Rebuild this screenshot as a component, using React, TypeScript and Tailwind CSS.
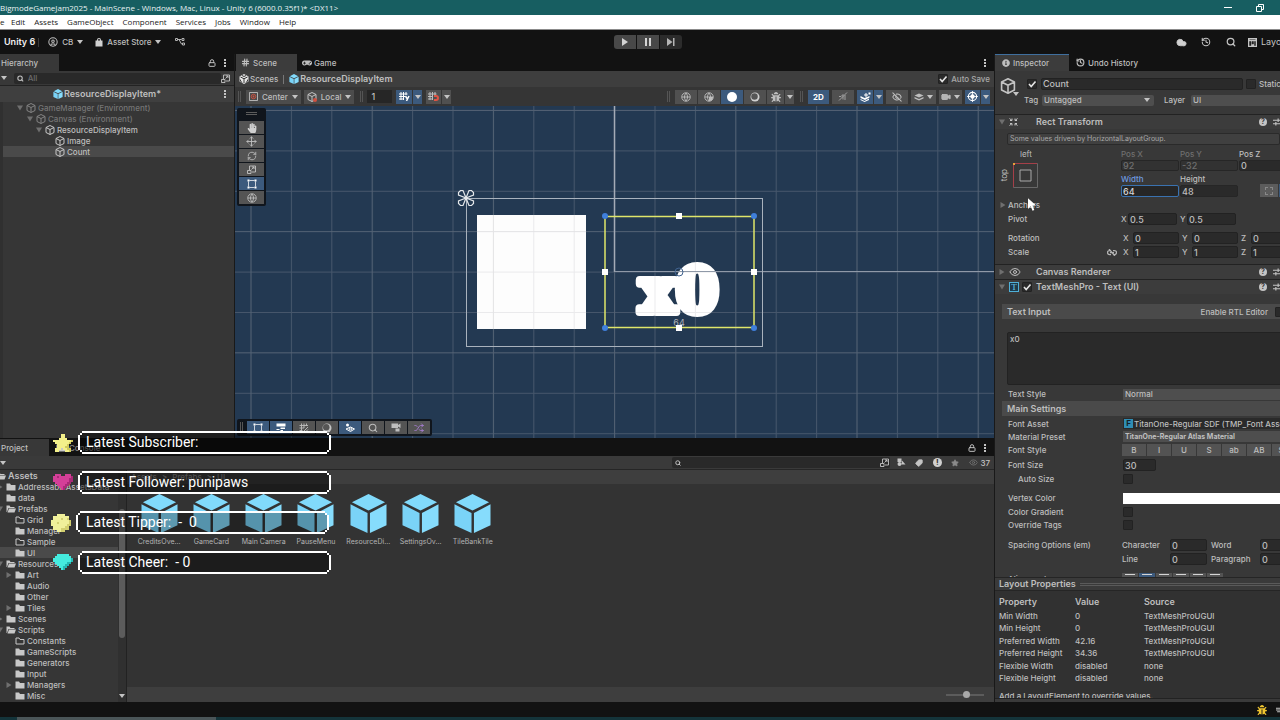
import type { ReactNode } from 'react'
import { CircleUser, Cloud, Eye, EyeOff, Hash, History, Lock, Move, RefreshCw, Search, Shuffle, Star, Tag, Video } from 'lucide-react'
import { FaBug, FaGamepad, FaHandPaper, FaInfoCircle } from 'react-icons/fa'

const Caret = ({ className = 'text-[#c4c4c4]' }: { className?: string }) => (
  <svg viewBox="0 0 6 4" className={`h-[4px] w-[6px] shrink-0 ${className}`}>
    <path d="M0 0h6L3 4z" fill="currentColor" />
  </svg>
)

const Fold = ({ open = false }: { open?: boolean }) => (
  <svg viewBox="0 0 6 6" className="h-[6px] w-[6px] shrink-0 text-[#6f6f6f]">
    <path d={open ? 'M0 .5h6L3 5.5z' : 'M.5 0v6L5.5 3z'} fill="currentColor" />
  </svg>
)

const Dots = () => (
  <svg viewBox="0 0 2 8" className="h-[8px] w-[2px] shrink-0" fill="#c4c4c4">
    <path d="M0 0h2v2H0zM0 3h2v2H0zM0 6h2v2H0z" />
  </svg>
)

const CubeOutline = ({ className = 'h-[10px] w-[10px] text-[#c4c4c4]' }: { className?: string }) => (
  <svg viewBox="0 0 20 20" className={`shrink-0 ${className}`} fill="none" stroke="currentColor" strokeWidth="2" strokeLinejoin="round">
    <path d="M10 1l8 4v10l-8 4-8-4V5zM2 5l8 4 8-4M10 9v10" />
  </svg>
)

const PrefabCube = ({ className = 'h-[11px] w-[11px]' }: { className?: string }) => (
  <svg viewBox="0 0 38 40" className={`shrink-0 ${className}`}>
    <path d="M19 0l17 8.500-17 8.500L2 8.500z" fill="#81dafb" />
    <path d="M.5 10.500L18 19.500V40L.5 32z" fill="#7ad3f7" />
    <path d="M37.500 10.500L20.500 19.500V40l17-8z" fill="#86dcfc" />
  </svg>
)

const UnityMark = () => (
  <svg viewBox="0 0 20 20" className="h-[10px] w-[10px] shrink-0">
    <path d="M10 0l9 5v10l-9 5-9-5V5z" fill="#e4e4e4" />
    <path d="M10 9.500V18M10 9.500L3 6M10 9.500L17 6M6 3l4 2 4-2M2.500 11l1 4 3 2M17.500 11l-1 4-3 2" stroke="#383838" strokeWidth="2" fill="none" />
  </svg>
)

const Folder = ({ kind }: { kind: string }) => (
  <svg viewBox="0 0 20 16" className="h-[8px] w-[10px] shrink-0" fill="#c8c8c8">
    {kind === 'full' && <path d="M1 1h7l2 3h9v11H1z" />}
    {kind === 'empty' && <path d="M2 2h6l2 3h8v9H2z" fill="none" stroke="#c8c8c8" strokeWidth="2" />}
    {kind === 'open' && <path d="M1 14V1h6l2 3h8v2H5L2 14zM6 7h14l-3 8H3z" />}
  </svg>
)

const Tick = () => (
  <svg viewBox="0 0 10 10" className="pointer-events-none absolute inset-0 h-full w-full">
    <path d="M2 5l2.200 2.500L8.500 2.500" fill="none" stroke="#e4e4e4" strokeWidth="1.600" />
  </svg>
)

const Check = ({ label, checked = false }: { label: string; checked?: boolean }) => (
  <span className="relative h-[10px] w-[10px] shrink-0">
    <input type="checkbox" aria-label={label} defaultChecked={checked} className="block h-[10px] w-[10px] appearance-none rounded-[1px] border border-[#222] bg-[#2a2a2a]" />
    {checked && <Tick />}
  </span>
)

const PickerIcon = () => (
  <svg viewBox="0 0 18 18" className="h-[9px] w-[9px] shrink-0" fill="none" stroke="#c4c4c4" strokeWidth="1.800">
    <path d="M5 10V2h12v12h-7M1 11h7v6H1zM9 9l5-5M10 4h4v4" />
  </svg>
)

const HelpIcons = () => (
  <span className="-mr-[1px] ml-auto flex items-center gap-[6px]">
    <span className="flex h-[8px] w-[8px] items-center justify-center rounded-full bg-[#c4c4c4] text-[7px] leading-[8px] font-bold text-[#383838]">?</span>
    <svg viewBox="0 0 14 14" className="h-[8px] w-[8px]" fill="none" stroke="#c4c4c4" strokeWidth="2">
      <path d="M0 4h14M9 1v6M0 10h14M5 7v6" />
    </svg>
  </span>
)

const Menu = () => (
  <nav className="flex h-[15px] shrink-0 items-center border-b border-[#8b8b8b] bg-white font-['Open_Sans',sans-serif] text-[8px] leading-[14px] font-normal text-[#222]">
    <span className="w-[11px]">e</span>
    <div className="flex gap-[9px]">
      {['Edit', 'Assets', 'GameObject', 'Component', 'Services', 'Jobs', 'Window', 'Help'].map((item) => (
        <button key={item}>{item}</button>
      ))}
    </div>
  </nav>
)

const TopBar = () => (
  <div className="flex h-[24px] shrink-0 items-center overflow-hidden bg-[#121212]">
    <div className="flex flex-1 items-center">
      <span className="ml-[4px] text-[9px] font-semibold text-[#f0f0f0]">Unity 6</span>
      <span className="ml-[3px] h-[9px] w-px bg-[#3a3a3a]" />
      <button className="ml-[9px] flex items-center gap-[4px]">
        <CircleUser size={10} strokeWidth={2.5} />CB<Caret />
      </button>
      <button className="ml-[12px] flex items-center gap-[4px]">
        <svg viewBox="0 0 16 18" className="h-[9px] w-[8px]" fill="#d0d0d0">
          <path d="M1 5h14v12H1zM4 6V4a4 4 0 018 0v2h-2V4a2 2 0 00-4 0v2z" />
        </svg>
        Asset Store<Caret />
      </button>
      <svg viewBox="0 0 20 16" className="ml-[14px] h-[8px] w-[10px]" fill="none" stroke="#b4b4b4" strokeWidth="2">
        <path d="M1 1h4v4H1zM5 3h8M8 3l5 9h2M14 1h4v4h-4zM15 10h4v4h-4z" />
      </svg>
    </div>
    <div className="flex w-[666px] items-center">
      <div className="flex gap-px overflow-hidden rounded-[3px]">
        <button aria-label="Play" className="flex h-[14px] w-[22px] items-center justify-center bg-[#484848]">
          <svg viewBox="0 0 8 8" className="h-[8px] w-[8px]" fill="#d4d4d4"><path d="M1 0l6 4-6 4z" /></svg>
        </button>
        <button aria-label="Pause" className="flex h-[14px] w-[22px] items-center justify-center bg-[#484848]">
          <svg viewBox="0 0 8 8" className="h-[8px] w-[8px]" fill="#d4d4d4"><path d="M1 0h2v8H1zM5 0h2v8H5z" /></svg>
        </button>
        <button aria-label="Step" className="flex h-[14px] w-[22px] items-center justify-center bg-[#2c2c2c]">
          <svg viewBox="0 0 8 8" className="h-[8px] w-[8px]" fill="#b4b4b4"><path d="M0 0l5.500 4L0 8zM6 0h1.500v8H6z" /></svg>
        </button>
      </div>
      <div className="ml-auto flex w-[104px] items-center overflow-hidden whitespace-nowrap text-[#c4c4c4]">
        <button aria-label="Cloud"><Cloud size={11} fill="#d0d0d0" /></button>
        <button aria-label="History" className="ml-[14px]"><History size={10} strokeWidth={2.5} /></button>
        <button aria-label="Search" className="ml-[15px]"><Search size={10} strokeWidth={3} /></button>
        <button className="ml-[12px] flex items-center gap-[4px]">
          <svg viewBox="0 0 18 18" className="h-[9px] w-[9px] shrink-0"><path d="M0 0h18v18H0z" fill="#c4c4c4" /><path d="M3 7h3v8H3zM8 7h3v5H8zM13 7h2v8h-2zM3 3h12" fill="#222" stroke="#222" /></svg>
          <span className="text-[9px] font-normal">Layout</span>
        </button>
      </div>
    </div>
  </div>
)

const hierarchy = [
  { name: 'GameManager (Environment)', pad: 'pl-[14px]', fold: true, dim: true },
  { name: 'Canvas (Environment)', pad: 'pl-[24px]', fold: true, dim: true },
  { name: 'ResourceDisplayItem', pad: 'pl-[33px]', fold: true },
  { name: 'Image', pad: 'pl-[43px]' },
  { name: 'Count', pad: 'pl-[43px]', selected: true },
]

const Hierarchy = () => (
  <section className="flex w-[235px] shrink-0 flex-col border-r border-[#191919] bg-[#363636]">
    <div className="flex h-[17px] items-center bg-[#121212] pr-[8px]">
      <button className="h-full w-[59px] bg-[#383838] pl-[1px] text-left">Hierarchy</button>
      <Lock size={8} strokeWidth={3} className="mr-[8px] ml-auto" />
      <Dots />
    </div>
    <div className="flex h-[15px] items-center border-b border-[#232323] bg-[#383838] pl-px">
      <Caret />
      <label className="ml-[7px] flex h-[11px] flex-1 items-center gap-[4px] rounded-[2px] bg-[#292929] pl-[3px]">
        <Search size={7} strokeWidth={4} />
        <input aria-label="Search hierarchy" placeholder="All" className="w-full min-w-0 text-[8px] leading-[11px] outline-none placeholder:text-[#6c6c6c]" />
      </label>
      <span className="mr-[4px]"><PickerIcon /></span>
    </div>
    <div className="flex h-[16px] items-center bg-[#3f3f3f] pr-[8px] pl-[53px] text-[9px]">
      <PrefabCube className="h-[10px] w-[10px]" />
      <span className="ml-px font-semibold">ResourceDisplayItem*</span>
      <span className="ml-auto"><Dots /></span>
    </div>
    <ul className="flex-1 border-l-[3px] border-[#303030]">
      {hierarchy.map((row) => (
        <li key={row.name} className={`flex h-[11px] items-center ${row.pad} ${row.selected ? 'bg-[#4a4a4a]' : ''} ${row.dim ? 'text-[#757575]' : ''}`}>
          <span className="flex w-[9px] justify-start">{row.fold && <Fold open />}</span>
          <CubeOutline className={`h-[10px] w-[10px] ${row.dim ? 'text-[#848484]' : 'text-[#c8c8c8]'}`} />
          <span className="ml-[2px]">{row.name}</span>
        </li>
      ))}
    </ul>
  </section>
)

const Grip = () => (
  <span className="flex gap-px">
    <span className="h-[11px] w-px bg-[#555]" />
    <span className="h-[11px] w-px bg-[#555]" />
  </span>
)

const Tool = ({ label, wide = 'w-[22px]', on = false, caret = false, children }: { label: string; wide?: string; on?: boolean; caret?: boolean; children: ReactNode }) => (
  <span className="flex gap-px">
    <button aria-label={label} className={`flex h-[14px] items-center justify-center ${wide} ${on ? 'bg-[#3c5a7d] text-white' : 'bg-[#505050]'}`}>
      {children}
    </button>
    {caret && (
      <button aria-label={`${label} options`} className={`flex h-[14px] w-[9px] items-center justify-center ${on ? 'bg-[#3c5a7d]' : 'bg-[#505050]'}`}>
        <Caret />
      </button>
    )}
  </span>
)

const Globe = ({ shade = '' }: { shade?: string }) => (
  <svg viewBox="0 0 20 20" className="h-[10px] w-[10px]" fill="none" stroke="currentColor" strokeWidth="1.800">
    {shade && <path d={shade} fill="currentColor" stroke="none" />}
    <circle cx="10" cy="10" r="8.500" />
    <path d="M2 10h16M10 2c-4 5-4 11 0 16M10 2c4 5 4 11 0 16" />
  </svg>
)

const GizmoIcon = () => (
  <svg viewBox="0 0 20 20" className="h-[11px] w-[11px]" fill="none" stroke="currentColor" strokeWidth="2">
    <circle cx="10" cy="10" r="7.500" />
    <path d="M10 0v20M0 10h20" strokeWidth="1.500" />
    <path d="M10 6a4 4 0 110 8 4 4 0 110-8" fill="currentColor" stroke="none" />
  </svg>
)

const GridIcon = () => (
  <svg viewBox="0 0 20 20" className="h-[10px] w-[10px]" fill="none" stroke="currentColor" strokeWidth="1.800">
    <path d="M5 1v17M10 1v9M15 1v5M1 5h17M1 10h9M1 15h6M8 18L18 8M13 18l5-5" />
  </svg>
)

const Layers = () => (
  <svg viewBox="0 0 20 16" className="h-[8px] w-[10px]" fill="currentColor">
    <path d="M10 1l9 4-9 4-9-4zM1 8l9 4 9-4v3l-9 4-9-4z" />
  </svg>
)

const SceneToolbar = () => (
  <div className="flex h-[19px] items-center bg-[#353535] pr-[4px]">
    <span className="ml-[3px]"><Grip /></span>
    <button className="ml-[5px] flex h-[14px] items-center gap-[4px] bg-[#4c4c4c] px-[3px]">
      <svg viewBox="0 0 20 20" className="h-[9px] w-[9px]" fill="none" strokeWidth="2"><path d="M1 1h18v18H1z" stroke="#c4c4c4" /><circle cx="10" cy="10" r="5" stroke="#d0503f" /><circle cx="10" cy="10" r="2" fill="#d0503f" /></svg>
      Center<Caret />
    </button>
    <button className="ml-[3px] flex h-[14px] items-center gap-[4px] bg-[#4c4c4c] px-[3px]">
      <span className="relative"><CubeOutline /><span className="absolute right-0 bottom-0 h-[4px] w-[4px] rounded-full bg-[#d0503f]" /></span>
      Local<Caret />
    </button>
    <span className="ml-[6px]"><Grip /></span>
    <input aria-label="Grid size" defaultValue="1" className="ml-[4px] h-[13px] w-[25px] bg-[#262626] pl-[4px] text-[9px]" />
    <div className="ml-[4px] flex gap-[4px]">
      <Tool label="Grid visibility" wide="w-[16px]" on caret>
        <svg viewBox="0 0 22 18" className="h-[9px] w-[11px]" fill="none" stroke="currentColor" strokeWidth="2"><path d="M4 0v16M9 0v16M14 0v6M0 4h17M0 9h12M0 14h10" /><path d="M13 8l3 5M20 8l-5 10" strokeWidth="3" /></svg>
      </Tool>
      <Tool label="Snapping" wide="w-[15px]" caret>
        <svg viewBox="0 0 22 18" className="h-[9px] w-[11px]" fill="none" stroke="currentColor" strokeWidth="2"><path d="M4 0v16M9 0v16M14 0v6M0 4h17M0 9h10M0 14h8" /><path d="M12 8h4a3 3 0 010 8h-4" stroke="#e05545" strokeWidth="4" /></svg>
      </Tool>
    </div>
    <div className="ml-auto flex items-center gap-[5px]">
      <Grip />
      <div className="flex gap-px">
        <Tool label="Wireframe"><Globe /></Tool>
        <Tool label="Shaded wireframe"><Globe shade="M10 18a8 8 0 008-8H10z" /></Tool>
        <Tool label="Shaded" on><span className="h-[10px] w-[10px] rounded-full bg-white" /></Tool>
        <Tool label="Unlit"><svg viewBox="0 0 20 20" className="h-[10px] w-[10px]"><circle cx="10" cy="10" r="9" fill="#d0d0d0" /><circle cx="9" cy="9" r="6.500" fill="#555" /></svg></Tool>
        <Tool label="Debug draw" wide="w-[17px]" caret><FaBug size={10} /></Tool>
      </div>
      <span className="ml-px"><Grip /></span>
      <div className="flex gap-[3px]">
        <Tool label="2D view" wide="w-[21px]" on><span className="text-[8px] font-bold">2D</span></Tool>
        <Tool label="Lighting"><svg viewBox="0 0 20 18" className="h-[9px] w-[10px]" stroke="#a0a0a0" strokeWidth="2" fill="none"><path d="M2 17L18 1M2 9l4 0 4-4v10M14 6v10" /></svg></Tool>
        <Tool label="Effects" wide="w-[16px]" on caret><svg viewBox="0 0 22 20" className="h-[10px] w-[11px]" fill="currentColor"><path d="M1 8l8 4 10-4v3l-9 5-9-4zM1 14l8 4 9-5v3l-9 4-8-4zM8 5h3V2h2v3h3v2h-3v3h-2V7H8zM17 1h4v4h-4z" /></svg></Tool>
        <Tool label="Hidden objects"><EyeOff size={10} strokeWidth={2.5} /></Tool>
        <Tool label="Layers" wide="w-[25px]"><span className="flex items-center gap-[3px]"><Layers /><Caret /></span></Tool>
        <Tool label="Camera" wide="w-[23px]"><span className="flex items-center gap-[3px]"><Video size={10} fill="#b4b4b4" /><Caret /></span></Tool>
        <Tool label="Gizmos" wide="w-[15px]" on caret><GizmoIcon /></Tool>
      </div>
    </div>
  </div>
)

const corners = [[370, 110], [519, 110], [370, 222], [519, 222]]
const edges = [[444, 110], [370, 166], [519, 166], [444, 222]]

const SceneDrawing = () => (
  <svg className="absolute inset-0 h-full w-full">
    <defs>
      <pattern id="cells" x="15.500" y="4" width="40.400" height="40.400" patternUnits="userSpaceOnUse">
        <path d="M.5 0v41M0 .5h41" stroke="#b0aeb6" strokeOpacity=".25" />
      </pattern>
      <pattern id="major" x="15.500" y="125" width="121.200" height="121.200" patternUnits="userSpaceOnUse">
        <path d="M.5 0v122M0 .5h122" stroke="#b4b4b8" strokeOpacity=".12" />
      </pattern>
    </defs>
    <rect width="100%" height="100%" fill="#233952" />
    <rect x="242" y="109" width="109" height="114" fill="#fdfdfd" />
    <text x="444" y="206" textAnchor="middle" fill="#fff" stroke="#fff" strokeWidth="8" strokeLinejoin="round" className="font-['DejaVu_Serif',serif] text-[61px] font-bold">x0</text>
    <rect width="100%" height="100%" fill="url(#cells)" />
    <rect width="100%" height="100%" fill="url(#major)" />
    <path d="M379.500 0v166" stroke="#a4abb6" strokeWidth="1.500" />
    <path d="M379.500 165.500H2000" stroke="#8f99a8" />
    <rect x="231.500" y="92.500" width="296" height="148" fill="none" stroke="#a9b2bd" />
    <rect x="370" y="110.500" width="149" height="111" fill="none" stroke="#dfe66a" strokeWidth="1.500" />
    <circle cx="444" cy="166" r="4" fill="none" stroke="#41638f" />
    <text x="444" y="220" textAnchor="middle" fill="#b0b4ba" className="text-[9px] font-normal">64</text>
    {corners.map(([x, y]) => <circle key={`${x}-${y}`} cx={x} cy={y} r="3" fill="#3f7fdb" />)}
    {edges.map(([x, y]) => <rect key={`${x}-${y}`} x={x - 3} y={y - 3} width="6" height="6" fill="#fff" />)}
    <g transform="translate(231 92)" fill="none" stroke="#e4e7ea" strokeWidth="1.200">
      {[0, 90, 180, 270].map((turn) => (
        <path key={turn} d="M0 0L3 -7.500L5.500 -7.500L7.500 -5.500L7.500 -3Z" transform={`rotate(${turn})`} />
      ))}
    </g>
  </svg>
)

const RectTool = () => (
  <svg viewBox="0 0 20 20" className="h-[10px] w-[10px]" fill="none" stroke="currentColor" strokeWidth="1.500">
    <path d="M3 3h14v14H3z" strokeDasharray="10 4" strokeDashoffset="-2" />
    <path d="M1 1h4v4H1zM15 1h4v4h-4zM1 15h4v4H1zM15 15h4v4h-4z" fill="currentColor" stroke="none" />
  </svg>
)

const tools = [
  { label: 'View', icon: <FaHandPaper size={10} className="text-[#d0d0d0]" /> },
  { label: 'Move', icon: <Move size={11} /> },
  { label: 'Rotate', icon: <RefreshCw size={10} /> },
  { label: 'Scale', icon: <PickerIcon /> },
  { label: 'Rect', icon: <RectTool />, on: true },
  { label: 'Transform', icon: <Globe /> },
]

const bottomTools = [
  { label: 'Handles', icon: <RectTool />, on: true },
  { label: 'Orientation', icon: <svg viewBox="0 0 20 18" className="h-[9px] w-[10px]" fill="currentColor"><path d="M1 1h18v6H1zM9 9h9v3H9zM1 12h6v2H1zM9 14h5v4H9z" /></svg>, on: true },
  { label: 'Grid', icon: <GridIcon /> },
  { label: 'Draw mode', icon: <svg viewBox="0 0 20 20" className="h-[10px] w-[10px]"><circle cx="10" cy="10" r="9" fill="#c4c4c4" /><circle cx="8.500" cy="8.500" r="6.500" fill="#555" /></svg> },
  { label: 'Visibility', icon: <svg viewBox="0 0 20 20" className="h-[10px] w-[10px]" fill="none" stroke="currentColor" strokeWidth="2"><circle cx="5" cy="4" r="3" fill="currentColor" stroke="none" /><path d="M2 12l9-4 8 4-8 5zM8 12a3 2 0 106 0 3 2 0 10-6 0" /></svg>, on: true },
  { label: 'Search', icon: <Search size={10} strokeWidth={2.5} /> },
  { label: 'Cameras', icon: <svg viewBox="0 0 20 18" className="h-[9px] w-[10px]" fill="currentColor"><path d="M1 1h13v9H1zM14 4l5-3v9l-5-3zM9 11h8v6H9z" /></svg> },
  { label: 'Shuffle', icon: <Shuffle size={10} className="text-[#ab7fd8]" /> },
]

const SceneView = () => (
  <section className="flex min-w-0 flex-1 flex-col">
    <div className="flex h-[17px] items-center bg-[#121212] pr-[8px] pl-[1px]">
      <button className="flex h-full w-[61px] items-center gap-[3px] bg-[#3c3c3c] pl-[5px]">
        <Hash size={9} strokeWidth={3} />Scene
      </button>
      <button className="ml-[5px] flex items-center gap-[2px]"><FaGamepad size={10} />Game</button>
      <span className="ml-auto"><Dots /></span>
    </div>
    <div className="flex h-[16px] items-center bg-[#3e3e3e] pr-[4px] pl-[4px]">
      <UnityMark />
      <a href="#scenes" className="ml-px text-[8px]">Scenes</a>
      <span className="mx-[5px] h-[9px] w-px bg-[#777]" />
      <PrefabCube className="h-[10px] w-[10px]" />
      <a href="#resource" className="ml-px text-[9px] font-semibold">ResourceDisplayItem</a>
      <label className="ml-auto flex items-center gap-[3px] text-[#a8a8a8]"><Check label="Auto Save" checked />Auto Save</label>
    </div>
    <SceneToolbar />
    <div className="relative flex-1 overflow-hidden">
      <SceneDrawing />
      <div className="absolute top-[2px] left-[2px] flex flex-col gap-px rounded-[2px] bg-[#10151c] p-[2px] pt-[4px]">
        <span className="mx-auto mb-[5px] h-[3px] w-[11px] border-y border-[#5c5c5c]" />
        {tools.map((tool) => (
          <button key={tool.label} aria-label={tool.label} className={`flex h-[13px] w-[25px] items-center justify-center ${tool.on ? 'bg-[#3c5a7d] text-white' : 'bg-[#545454]'}`}>{tool.icon}</button>
        ))}
      </div>
      <div className="absolute bottom-[2px] left-[2px] flex items-center gap-px rounded-[2px] bg-[#10151c] p-[2px] pl-[3px]">
        <span className="mr-[3px]"><Grip /></span>
        {bottomTools.map((tool) => (
          <button key={tool.label} aria-label={tool.label} className={`flex h-[13px] w-[22px] items-center justify-center ${tool.on ? 'bg-[#3c5a7d] text-white' : 'bg-[#545454]'}`}>{tool.icon}</button>
        ))}
      </div>
    </div>
  </section>
)

const tree = [
  { name: 'Assets', depth: 0, kind: 'open', fold: 'open', bold: true },
  { name: 'AddressableAssetsData', depth: 1, kind: 'full', fold: 'closed' },
  { name: 'data', depth: 1, kind: 'full' },
  { name: 'Prefabs', depth: 1, kind: 'open', fold: 'open' },
  { name: 'Grid', depth: 2, kind: 'empty' },
  { name: 'Manager', depth: 2, kind: 'full' },
  { name: 'Sample', depth: 2, kind: 'empty' },
  { name: 'UI', depth: 2, kind: 'full', selected: true },
  { name: 'Resources', depth: 1, kind: 'open', fold: 'open' },
  { name: 'Art', depth: 2, kind: 'full', fold: 'closed' },
  { name: 'Audio', depth: 2, kind: 'full' },
  { name: 'Other', depth: 2, kind: 'full' },
  { name: 'Tiles', depth: 2, kind: 'full', fold: 'closed' },
  { name: 'Scenes', depth: 1, kind: 'full', fold: 'closed' },
  { name: 'Scripts', depth: 1, kind: 'open', fold: 'open' },
  { name: 'Constants', depth: 2, kind: 'empty' },
  { name: 'GameScripts', depth: 2, kind: 'full' },
  { name: 'Generators', depth: 2, kind: 'full' },
  { name: 'Input', depth: 2, kind: 'full' },
  { name: 'Managers', depth: 2, kind: 'full', fold: 'closed' },
  { name: 'Misc', depth: 2, kind: 'full' },
]
const treeIndent = ['-ml-[13px]', '-ml-[3px]', 'ml-[6px]']

const prefabs = ['CreditsOve...', 'GameCard', 'Main Camera', 'PauseMenu', 'ResourceDi...', 'SettingsOv...', 'TileBankTile']

const Project = () => (
  <section className="flex h-[264px] shrink-0 flex-col bg-[#333]">
    <div className="flex h-[18px] items-center bg-[#121212] pt-px pr-[8px]">
      <button className="h-full w-[49px] bg-[#383838] pl-[1px] text-left">Project</button>
      <button className="ml-[7px] flex items-center gap-[3px] text-[#8a8a8a]"><Folder kind="full" />Console</button>
      <Lock size={8} strokeWidth={3} className="mr-[8px] ml-auto" />
      <Dots />
    </div>
    <div className="flex h-[14px] items-center border-b border-[#262626] bg-[#3a3a3a] pr-[4px]">
      <Caret />
      <label className="ml-auto flex h-[11px] w-[218px] items-center rounded-[2px] bg-[#292929] pr-px pl-[3px]">
        <Search size={6} strokeWidth={4} />
        <input aria-label="Search assets" className="min-w-0 flex-1 px-[3px] text-[9px] leading-[11px] outline-none" />
        <PickerIcon />
      </label>
      <div className="flex items-center text-[#c4c4c4]">
        <button aria-label="Filter by type" className="w-[20px] pl-[7px]">
          <svg viewBox="0 0 18 18" className="h-[9px] w-[9px]" fill="currentColor"><path d="M1 1h8v7H1zM10 5l7 8H9zM1 12a4 4 0 108 0 4 4 0 10-8 0" /></svg>
        </button>
        <button aria-label="Filter by label" className="flex w-[18px] justify-center"><Tag size={8} fill="#c4c4c4" className="rotate-90" /></button>
        <button aria-label="Alerts" className="flex h-[9px] w-[18px] justify-center"><span className="h-[9px] w-[9px] rounded-full bg-[#d0d0d0] text-[8px] leading-[9px] font-bold text-[#333]">!</span></button>
        <button aria-label="Favorites" className="flex w-[18px] justify-center"><Star size={8} fill="#8a8a8a" className="text-[#8a8a8a]" /></button>
        <button className="flex items-center gap-[2px] pl-[5px]"><Eye size={9} className="text-[#777]" />37</button>
      </div>
    </div>
    <div className="flex min-h-0 flex-1">
      <ul className="relative w-[127px] shrink-0 overflow-hidden border-r border-[#222] bg-[#363636]">
        {tree.map((row) => (
          <li key={row.name} className={`flex h-[11px] items-center whitespace-nowrap ${row.selected ? 'bg-[#4a4a4a]' : ''}`}>
            <span className={`flex w-[9px] shrink-0 ${treeIndent[row.depth]}`}>{row.fold && <Fold open={row.fold === 'open'} />}</span>
            <Folder kind={row.kind} />
            <span className={`ml-[2px] ${row.bold ? 'text-[9px] font-semibold' : ''}`}>{row.name}</span>
          </li>
        ))}
        <li aria-hidden className="absolute top-0 right-0 h-full w-[8px] bg-[#303030]">
          <div className="mx-auto mt-[39px] h-[129px] w-[6px] rounded-full bg-[#5c5c5c]" />
          <span className="absolute bottom-[4px] left-[1px]"><Caret /></span>
        </li>
      </ul>
      <div className="flex min-w-0 flex-1 flex-col">
        <div className="flex h-[14px] items-center gap-[5px] bg-[#3e3e3e] pl-[4px] text-[#8f8f8f]">
          <a href="#assets">Assets</a><span>&gt;</span><a href="#prefabs">Prefabs</a><span>&gt;</span><a href="#ui">UI</a>
        </div>
        <div className="ml-[6px] grid w-[366px] flex-1 grid-cols-7 pt-[10px]">
          {prefabs.map((name) => (
            <button key={name} className="flex flex-col items-center self-start text-[7px] leading-[10px] font-normal text-[#b4b4b4]">
              <PrefabCube className="mb-[4px] h-[39px] w-[37px]" />
              <span className="whitespace-nowrap">{name}</span>
            </button>
          ))}
        </div>
        <div className="flex h-[15px] items-center justify-end bg-[#3e3e3e] pr-[10px]">
          <span className="relative flex h-[8px] w-[38px] items-center">
            <input type="range" aria-label="Icon size" defaultValue={55} className="h-[2px] w-full appearance-none bg-[#5c5c5c] [&::-webkit-slider-thumb]:h-[7px] [&::-webkit-slider-thumb]:w-[7px] [&::-webkit-slider-thumb]:appearance-none [&::-webkit-slider-thumb]:rounded-full [&::-webkit-slider-thumb]:bg-[#a8a8a8]" />
          </span>
        </div>
      </div>
    </div>
  </section>
)

const fieldClass = 'h-[12px] rounded-[2px] border border-[#222] bg-[#2a2a2a] px-px text-[9px] leading-[10px] outline-none'

const Axis = ({ name, of, value, wide }: { name: string; of: string; value: string; wide: string }) => (
  <label className="flex shrink-0 items-center">
    <span className="w-[7px]">{name}</span>
    <input aria-label={`${of} ${name}`} defaultValue={value} className={`${fieldClass} ${wide}`} />
  </label>
)

const Size = ({ label, value, off = false, active = false, tall = 'h-[11px]' }: { label: string; value: string; off?: boolean; active?: boolean; tall?: string }) => (
  <label className={`flex w-[58px] shrink-0 flex-col gap-px ${off ? 'text-[#6f6f6f]' : ''} ${active ? 'text-[#6f9be0]' : ''}`}>
    <span className="h-[10px] leading-[10px]">{label}</span>
    <input
      defaultValue={value}
      disabled={off}
      className={`w-full rounded-[2px] border px-px text-[9px] leading-[9px] outline-none ${tall} ${active ? 'border-[#3a72b0] bg-[#262626] text-[#d4d4d4]' : 'border-[#262626] bg-[#2a2a2a]'} ${off ? 'bg-[#323232]' : ''}`}
    />
  </label>
)

const Row = ({ label, tall = 'h-[13px]', indent = '', children }: { label: string; tall?: string; indent?: string; children?: ReactNode }) => (
  <div className={`flex shrink-0 items-center pl-[13px] ${tall}`}>
    <span className={`w-[115px] shrink-0 ${indent}`}>{label}</span>
    {children}
  </div>
)

const Header = ({ title, open = false, children }: { title: string; open?: boolean; children: ReactNode }) => (
  <div className="flex h-[15px] shrink-0 items-center border-t border-[#222] bg-[#3c3c3c] pl-[4px]">
    <Fold open={open} />
    <span className="flex w-[31px] shrink-0 items-center gap-[3px] pl-[4px]">{children}</span>
    <h2 className="text-[9px] font-semibold">{title}</h2>
    <HelpIcons />
  </div>
)

const props = [
  ['Min Width', '0', 'TextMeshProUGUI'],
  ['Min Height', '0', 'TextMeshProUGUI'],
  ['Preferred Width', '42.16', 'TextMeshProUGUI'],
  ['Preferred Height', '34.36', 'TextMeshProUGUI'],
  ['Flexible Width', 'disabled', 'none'],
  ['Flexible Height', 'disabled', 'none'],
]

const Inspector = () => (
  <aside className="relative flex w-[286px] shrink-0 flex-col overflow-hidden border-l border-[#191919] bg-[#383838] whitespace-nowrap">
    <div className="flex h-[17px] shrink-0 items-center bg-[#121212]">
      <button className="flex h-full w-[74px] items-center gap-[3px] border-t border-[#3f6f9e] bg-[#3c3c3c] pl-[7px]">
        <FaInfoCircle size={8} />Inspector
      </button>
      <button className="ml-[7px] flex items-center gap-[3px]"><History size={9} strokeWidth={3} />Undo History</button>
    </div>
    <div className="flex shrink-0 pt-[7px] pb-[8px] pl-[5px]">
      <span className="relative w-[24px] shrink-0"><CubeOutline className="h-[16px] w-[16px] text-[#c4c4c4]" /><Caret className="absolute top-[14px] left-[13px] text-[#c4c4c4]" /></span>
      <div className="flex flex-col gap-[5px]">
        <div className="flex h-[11px] items-center">
          <span className="ml-[3px] flex"><Check label="Active" checked /></span>
          <input aria-label="Name" defaultValue="Count" className={`ml-[4px] w-[202px] font-medium ${fieldClass}`} />
          <label className="ml-[3px] flex items-center gap-[3px]"><Check label="Static" />Static</label>
        </div>
        <div className="flex h-[12px] items-center">
          <label htmlFor="tag" className="w-[18px]">Tag</label>
          <span className="relative flex items-center">
            <select id="tag" className="h-[11px] w-[112px] appearance-none rounded-[2px] bg-[#4e4e4e] px-[2px] leading-[11px]"><option>Untagged</option></select>
            <Caret className="pointer-events-none absolute right-[4px] text-[#c4c4c4]" />
          </span>
          <label htmlFor="layer" className="ml-[10px] w-[27px]">Layer</label>
          <select id="layer" className="h-[11px] w-[112px] appearance-none rounded-[2px] bg-[#4e4e4e] px-[2px] leading-[11px]"><option>UI</option></select>
        </div>
      </div>
    </div>
    <div className="flex min-h-0 flex-1 flex-col overflow-hidden">
      <Header title="Rect Transform" open>
        <svg viewBox="0 0 18 16" className="h-[8px] w-[9px]" fill="none" stroke="#c4c4c4" strokeWidth="2"><path d="M1 1l5 4M6 1v4H2M17 1l-5 4M12 1v4h4M1 15l5-4M6 15v-4H2M17 15l-5-4M12 15v-4h4" /></svg>
      </Header>
      <p className="mt-[4px] ml-[12px] h-[12px] shrink-0 rounded-[2px] border border-[#2a2a2a] bg-[#404040] pl-[2px] text-[7px] leading-[10px] font-normal text-[#a8a8a8]">Some values driven by HorizontalLayoutGroup.</p>
      <div className="mt-[4px] flex h-[48px] shrink-0">
        <div className="grid w-[126px] shrink-0 grid-cols-[18px_26px] grid-rows-[13px_26px] text-[8px] font-normal">
          <span className="col-start-2 pl-[7px] leading-[10px]">left</span>
          <span className="flex rotate-180 items-center justify-center self-center [writing-mode:vertical-rl]">top</span>
          <button aria-label="Anchor presets">
            <svg viewBox="0 0 25 25" className="h-[25px] w-[25px]" fill="none"><path d="M.5 .5h24v24H.5z" stroke="#686868" /><path d="M.5 24V.5H24" stroke="#a53f48" /><path d="M7 7h11v11H7z" stroke="#a8a8a8" /><path d="M0 0h2v2H0z" fill="#e8a23a" /></svg>
          </button>
        </div>
        <div className="flex flex-col gap-[3px]">
          <div className="flex gap-px">
            <Size label="Pos X" value="92" off />
            <Size label="Pos Y" value="-32" off />
            <Size label="Pos Z" value="0" />
          </div>
          <div className="flex items-end gap-px">
            <Size label="Width" value="64" active tall="h-[12px]" />
            <Size label="Height" value="48" tall="h-[12px]" />
            <button aria-label="Blueprint mode" className="ml-[21px] flex h-[13px] w-[18px] items-center justify-center bg-[#5c5c5c]"><span className="h-[8px] w-[8px] border border-dashed border-[#888]" /></button>
            <button aria-label="Raw edit" className="h-[13px] w-[18px] bg-[#3c5a7d]" />
          </div>
        </div>
      </div>
      <div className="mt-px flex h-[14px] shrink-0 items-center gap-[2px] pl-[5px]"><Fold />Anchors</div>
      <Row label="Pivot" tall="h-[14px]">
        <div className="-ml-[2px] flex gap-[3px]"><Axis of="Pivot" name="X" value="0.5" wide="w-[49px]" /><Axis of="Pivot" name="Y" value="0.5" wide="w-[49px]" /></div>
      </Row>
      {['Rotation', 'Scale'].map((name) => (
        <div key={name} className="flex h-[14px] shrink-0 items-center pl-[13px] [&:nth-child(6)]:mt-[5px]">
          <span className="w-[99px] shrink-0">{name}</span>
          <span className="w-[16px] shrink-0">{name === 'Scale' && <svg viewBox="0 0 20 14" className="h-[7px] w-[10px]" fill="none" stroke="#b4b4b4" strokeWidth="2.500"><path d="M8 3H5a4 4 0 000 8h3M12 3h3a4 4 0 010 8h-3M6 7h8M4 0l12 14" /></svg>}</span>
          {['X', 'Y', 'Z'].map((axis) => (
            <label key={axis} className="flex w-[59px] shrink-0 items-center">
              <span className="w-[10px]">{axis}</span>
              <input aria-label={`${name} ${axis}`} defaultValue={name === 'Scale' ? '1' : '0'} className={`${fieldClass} w-[46px]`} />
            </label>
          ))}
        </div>
      ))}
      <div className="mt-[5px] shrink-0">
        <Header title="Canvas Renderer"><Eye size={12} strokeWidth={2} /></Header>
        <Header title="TextMeshPro - Text (UI)" open>
          <span className="flex h-[10px] w-[10px] shrink-0 items-center justify-center border border-[#4fb0d8] bg-[#1d3a4a] font-['Liberation_Serif',serif] text-[9px] leading-[9px] text-[#6fd0f4]">T</span>
          <Check label="TextMeshPro enabled" checked />
        </Header>
      </div>
      <div className="mt-[10px] ml-[7px] flex h-[15px] shrink-0 items-center bg-[#4a4a4a] pl-[5px]">
        <h3 className="text-[9px] font-semibold">Text Input</h3>
        <label className="-mr-[5px] ml-auto flex items-center gap-[7px]">Enable RTL Editor<Check label="Enable RTL Editor" /></label>
      </div>
      <textarea aria-label="Text" defaultValue="x0" className="mt-[13px] -mr-[3px] ml-[12px] h-[53px] shrink-0 resize-none rounded-[2px] border border-[#222] bg-[#2a2a2a] px-[2px] pt-[1px] leading-[11px]" />
      <div className="mt-[3px] flex h-[12px] shrink-0 items-center pl-[13px]">
        <label htmlFor="style" className="w-[115px] shrink-0">Text Style</label>
        <select id="style" className="h-[11px] w-full appearance-none bg-[#4e4e4e] px-[2px] leading-[11px]"><option>Normal</option></select>
      </div>
      <h3 className="mt-px ml-[7px] flex h-[15px] shrink-0 items-center bg-[#4a4a4a] pl-[5px] text-[9px] font-semibold">Main Settings</h3>
      <div className="mt-px shrink-0">
        <Row label="Font Asset">
          <span className="flex h-[11px] flex-1 items-center gap-[1px] bg-[#2a2a2a] pl-[1px]"><span className="flex h-[9px] w-[9px] shrink-0 items-center justify-center bg-[#2f8db4] text-[8px] leading-[9px] font-bold text-[#12232c]">F</span>TitanOne-Regular SDF (TMP_Font Asset)</span>
        </Row>
        <div className="flex h-[13px] items-center pl-[13px]">
          <label htmlFor="preset" className="w-[115px] shrink-0">Material Preset</label>
          <select id="preset" className="h-[11px] w-full appearance-none bg-[#4e4e4e] px-[2px] text-[7px] leading-[11px] font-bold"><option>TitanOne-Regular Atlas Material</option></select>
        </div>
        <Row label="Font Style" tall="h-[14px]">
          <div className="-ml-px flex gap-px">
            {['B', 'I', 'U', 'S', 'ab', 'AB', 'SC'].map((style) => (
              <button key={style} className="flex h-[12px] w-[24px] shrink-0 items-center justify-center bg-[#535353]">{style}</button>
            ))}
          </div>
        </Row>
      </div>
      <div className="mt-px shrink-0">
        <Row label="Font Size" tall="h-[14px]"><input aria-label="Font Size" defaultValue="30" className={`${fieldClass} w-[33px]`} /></Row>
        <Row label="Auto Size" indent="pl-[10px]"><Check label="Auto Size" /></Row>
      </div>
      <div className="mt-[6px] shrink-0">
        <Row label="Vertex Color" tall="h-[14px]"><button aria-label="Vertex Color" className="h-[11px] flex-1 bg-white" /></Row>
        <Row label="Color Gradient"><Check label="Color Gradient" /></Row>
        <Row label="Override Tags" tall="h-[14px]"><Check label="Override Tags" /></Row>
      </div>
      <div className="mt-[6px] shrink-0">
        {[['Spacing Options (em)', 'Character', 'Word'], ['', 'Line', 'Paragraph']].map(([label, first, second]) => (
          <Row key={first} label={label} tall="h-[14px]">
            <label className="-ml-[1px] flex shrink-0 items-center"><span className="w-[48px]">{first}</span><input defaultValue="0" className={`${fieldClass} w-[37px]`} /></label>
            <label className="ml-[4px] flex shrink-0 items-center"><span className="w-[49px]">{second}</span><input defaultValue="0" className={`${fieldClass} w-[37px]`} /></label>
          </Row>
        ))}
      </div>
      <div className="mt-[6px] shrink-0">
        <Row label="Alignment">
          <div className="-ml-px flex gap-px">
            {['left', 'center', 'right', 'justified', 'flush', 'geometry'].map((side) => (
              <button key={side} aria-label={side} className={`flex h-[11px] w-[16px] items-start px-[3px] pt-[1px] ${side === 'center' ? 'bg-[#3c5a7d]' : 'bg-[#535353]'}`}><span className="h-px w-full bg-[#d4d4d4]" /></button>
            ))}
          </div>
        </Row>
      </div>
    </div>
    <div className="flex h-[125px] shrink-0 flex-col bg-[#313131] pl-[4px]">
      <div className="-ml-[4px] flex h-[14px] shrink-0 items-center gap-[4px] border-y border-[#252525] bg-[#3a3a3a] pl-[4px]">
        <h2 className="text-[9px] font-semibold">Layout Properties</h2>
        <span className="h-[3px] flex-1 border-y border-[#5a5a5a]" />
      </div>
      <table className="mt-[4px] w-full table-fixed border-collapse text-left">
        <thead>
          <tr className="h-[14px] text-[9px]">{['Property', 'Value', 'Source'].map((head, i) => <th key={head} className={`p-0 font-semibold ${i === 0 ? 'w-[76px]' : ''} ${i === 1 ? 'w-[69px]' : ''}`}>{head}</th>)}</tr>
        </thead>
        <tbody>
          {props.map((cells) => (
            <tr key={cells[0]} className="odd:h-[13px] even:h-[12px]">
              {cells.map((cell, i) => <td key={i} className="p-0">{cell}</td>)}
            </tr>
          ))}
        </tbody>
      </table>
      <p className="mt-[6px] h-[8px] overflow-hidden leading-[12px]">Add a LayoutElement to override values.</p>
      <div className="mt-auto -ml-[4px] h-[4px] border-t border-[#222] bg-[#3a3a3a]" />
    </div>
    <svg viewBox="0 0 10 14" className="absolute top-[144px] left-[33px] h-[13px] w-[9px]">
      <path d="M0 0v12l3-3 2 5 2-1-2-5h4z" fill="#fff" />
    </svg>
  </aside>
)

// one character per 2px block, digits pick a shade
const star = ['    11    ', '    11    ', '   1111   ', '1111111112', ' 11111112 ', '  111112  ', '  111122  ', ' 111 1122 ', ' 11   112 ']
const heart = [' 111  111 ', '1121111112', '1111111122', '1111111122', ' 11111122 ', '  111122  ', '   1122   ', '    12    ']
const coin = ['   1111   ', ' 11111111 ', ' 11112112 ', '1111111112', '1112111112', '1111111122', ' 11111122 ', ' 11112222 ', '   1122   ']
const gem = ['  111111  ', ' 11111111 ', '1111111112', '1111111112', ' 11111122 ', '  111122  ', '   1122   ', '    12    ']

const Sprite = ({ rows, colors }: { rows: string[]; colors: string[] }) => (
  <svg viewBox="0 0 10 10" shapeRendering="crispEdges" className="h-[20px] w-[20px] shrink-0">
    {rows.map((row, y) => [...row].map((c, x) => c !== ' ' && <rect key={`${x}-${y}`} x={x} y={y + 0.5} width="1" height="1" fill={colors[Number(c) - 1]} />))}
  </svg>
)

const alerts = [
  { text: 'Latest Subscriber:', rows: star, colors: ['#f3f08a', '#cfc95c'] },
  { text: 'Latest Follower: punipaws', rows: heart, colors: ['#d43f98', '#a82a77'] },
  { text: 'Latest Tipper:  -  0', rows: coin, colors: ['#f0f09a', '#d3d070'], shift: true },
  { text: 'Latest Cheer:  - 0', rows: gem, colors: ['#45ecdf', '#25b9b4'] },
]

const StreamOverlay = () => (
  <div className="pointer-events-none absolute bottom-[146px] left-[53px] flex flex-col gap-[17px] font-[Roboto,sans-serif] text-[14px] font-normal text-white">
    {alerts.map((alert) => (
      <div key={alert.text} className={`flex h-[23px] items-center gap-[5px] ${alert.shift ? '-ml-[2px]' : ''}`}>
        <Sprite rows={alert.rows} colors={alert.colors} />
        <div className="relative h-full w-[253px]">
          <span className={`absolute inset-[2px] ${alert.shift ? 'bg-black/30' : 'bg-black/45'}`} />
          <span className="absolute inset-x-[4px] top-0 h-[2px] bg-white" />
          <span className="absolute inset-x-[4px] bottom-0 h-[2px] bg-white" />
          <span className="absolute inset-y-[4px] left-0 w-[2px] bg-white" />
          <span className="absolute inset-y-[4px] right-0 w-[2px] bg-white" />
          <span className="absolute top-[2px] left-[2px] h-[2px] w-[2px] bg-white" />
          <span className="absolute top-[2px] right-[2px] h-[2px] w-[2px] bg-white" />
          <span className="absolute bottom-[2px] left-[2px] h-[2px] w-[2px] bg-white" />
          <span className="absolute right-[2px] bottom-[2px] h-[2px] w-[2px] bg-white" />
          <p className={`relative leading-[23px] whitespace-pre ${alert.shift ? 'pl-[10px]' : 'pl-[8px]'}`}>{alert.text}</p>
        </div>
      </div>
    ))}
  </div>
)

const App = () => {
  return (
    <div className="relative flex h-screen w-full flex-col overflow-hidden bg-[#121212] font-['Inter',sans-serif] text-[8px] leading-[12px] font-medium text-[#bebebe]">
      <header className="flex h-[15px] shrink-0 items-center bg-[#175e61] font-['Open_Sans',sans-serif] text-[8px] leading-[15px] font-normal text-[#e8f2f2]">
        <h1>BigmodeGameJam2025 - MainScene - Windows, Mac, Linux - Unity 6 (6000.0.35f1)* &lt;DX11&gt;</h1>
        <button aria-label="Minimize" className="mr-[24px] ml-auto h-px w-[8px] bg-white" />
        <button aria-label="Restore" className="mr-[16px]">
          <svg viewBox="0 0 8 8" className="h-[8px] w-[8px]" fill="none" stroke="#fff"><path d="M.5 2.500h5v5h-5zM2.500 2V.5h5v5H6" /></svg>
        </button>
      </header>
      <Menu />
      <TopBar />
      <main className="flex min-h-0 flex-1">
        <div className="flex min-w-0 flex-1 flex-col">
          <div className="flex min-h-0 flex-1">
            <Hierarchy />
            <SceneView />
          </div>
          <Project />
        </div>
        <Inspector />
      </main>
      <footer className="flex h-[15px] shrink-0 items-center justify-end gap-[9px] overflow-hidden">
        <FaBug size={10} className="text-[#f0c530]" />
        <svg viewBox="0 0 7 10" className="h-[10px] w-[4px]" fill="#c4c4c4"><path d="M0 1h7v2H0zM0 4h7v2H0zM2 7h5v2H2z" /></svg>
      </footer>
      <div className="flex h-[3px] shrink-0 bg-[#14343a]">
        <span className="ml-[17px] h-full w-[199px] bg-[#4a5558]" />
      </div>
      <StreamOverlay />
    </div>
  )
}

export default App
